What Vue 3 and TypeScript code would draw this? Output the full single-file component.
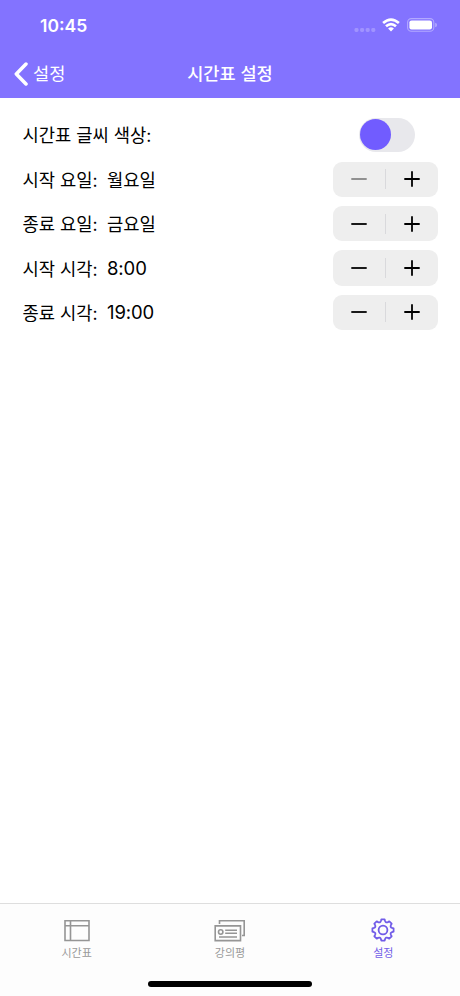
<script setup lang="ts">
import { ref } from 'vue'

interface Row {
  label: string
  value: string
  numeric: boolean
  minusDisabled: boolean
}

const rows = ref<Row[]>([
  { label: '시작 요일:', value: '월요일', numeric: false, minusDisabled: true },
  { label: '종료 요일:', value: '금요일', numeric: false, minusDisabled: false },
  { label: '시작 시각:', value: '8:00', numeric: true, minusDisabled: false },
  { label: '종료 시각:', value: '19:00', numeric: true, minusDisabled: false },
])

function gearPath(): string {
  const parts: string[] = []
  const point = (r: number, deg: number): string => {
    const a = (deg * Math.PI) / 180
    return `${(13 + r * Math.cos(a)).toFixed(2)} ${(13 + r * Math.sin(a)).toFixed(2)}`
  }
  for (let i = 0; i < 8; i++) {
    const c = i * 45
    parts.push(`${i === 0 ? 'M' : 'L'}${point(10.7, c - 9)}`)
    parts.push(`L${point(10.7, c + 9)}`)
    parts.push(`L${point(9.3, c + 13)}`)
    parts.push(`Q${point(7.5, c + 22.5)} ${point(9.3, c + 32)}`)
  }
  return parts.join('') + 'Z'
}
const gear = gearPath()
</script>

<template>
  <div class="screen">
    <header class="header">
      <div class="status">
        <span class="clock">10:45</span>
        <div class="indicators">
          <svg class="dots" width="22" height="6" viewBox="0 0 22 6">
            <rect v-for="n in 4" :key="n" :x="(n - 1) * 5.6 + 0.5" y="1" width="4" height="4" rx="1.4" />
          </svg>
          <svg class="wifi" width="18" height="14" viewBox="0 0 18 14">
            <path d="M1.1 5.1Q9-2 16.9 5.1" />
            <path d="M4 8.3Q9 3.9 14 8.3" />
            <path class="solid" d="M6.1 10.5Q9 8.1 11.9 10.5L9 13.5Z" />
          </svg>
          <svg class="battery" width="31" height="14" viewBox="0 0 31 14">
            <rect class="shell" x=".6" y=".6" width="26.2" height="12.6" rx="3.8" />
            <rect class="charge" x="2.4" y="2.4" width="22.6" height="9" rx="2.2" />
            <path class="tip" d="M28.2 4.7Q30 5.2 30 7T28.2 9.2Z" />
          </svg>
        </div>
      </div>
      <nav class="navbar">
        <button class="back" type="button">
          <svg width="14" height="24" viewBox="0 0 14 24"><path d="M12 2L2.3 12L12 22" /></svg>
          <span>설정</span>
        </button>
        <h1>시간표 설정</h1>
      </nav>
    </header>

    <main class="list">
      <div class="row">
        <span class="label">시간표 글씨 색상:</span>
        <button class="switch" type="button" role="switch" aria-checked="false"><i /></button>
      </div>
      <div v-for="row in rows" :key="row.label" class="row">
        <span class="label fixed">{{ row.label }}</span>
        <span class="value" :class="{ numeric: row.numeric }">{{ row.value }}</span>
        <div class="stepper">
          <button type="button" :disabled="row.minusDisabled">
            <svg width="16" height="16" viewBox="0 0 16 16"><path d="M.3 8H15.7" /></svg>
          </button>
          <i class="divider" />
          <button type="button">
            <svg width="16" height="16" viewBox="0 0 16 16"><path d="M.3 8H15.7M8 .3V15.7" /></svg>
          </button>
        </div>
      </div>
    </main>

    <footer class="tabbar">
      <div class="tabs">
        <div class="tab">
          <svg width="34" height="26" viewBox="0 0 34 26">
            <path d="M5 3.7H29V23.5H5ZM5 8.7H29M10.5 3.7V23.5" />
          </svg>
          <span>시간표</span>
        </div>
        <div class="tab">
          <svg width="34" height="26" viewBox="0 0 34 26">
            <path d="M6.5 7V3.7H31.2V18.5H29M2.2 8.9H27.5V23.6H2.2Z" />
            <circle cx="7.7" cy="15" r="2.2" />
            <path d="M12.2 13.3H24M12.2 16.3H24M6 20H24" />
          </svg>
          <span>강의평</span>
        </div>
        <div class="tab active">
          <svg width="26" height="26" viewBox="0 0 26 26">
            <path :d="gear" />
            <circle cx="13" cy="13" r="4.4" />
          </svg>
          <span>설정</span>
        </div>
      </div>
      <div class="home" />
    </footer>
  </div>
</template>

<style>
body {
  margin: 0;
  background: #fff;
}
</style>

<style scoped>
.screen {
  display: flex;
  flex-direction: column;
  width: 460px;
  height: 996px;
  overflow: hidden;
  background: #fff;
  color: #000;
  font-family: Inter, 'Noto Sans CJK KR', sans-serif;
}
button {
  padding: 0;
  border: 0;
  background: none;
  color: inherit;
  font: inherit;
}
svg {
  display: block;
  flex: none;
  fill: none;
  stroke: currentColor;
}
.header {
  height: 98px;
  flex: none;
  background: #8373ff;
  color: #fff;
}
.status {
  display: flex;
  height: 50px;
  box-sizing: border-box;
  padding: 0 22.5px 0 40px;
  align-items: center;
  justify-content: space-between;
}
.clock {
  font-size: 17.5px;
  font-weight: 600;
}
.indicators {
  display: flex;
  align-items: center;
}
.dots {
  margin: 9px 6px 0 0;
  fill: #a093ff;
  stroke: none;
}
.wifi {
  margin-right: 7px;
  stroke-width: 2.7;
}
.wifi .solid {
  fill: #fff;
  stroke: none;
}
.battery .shell {
  stroke: #b3a9ff;
  stroke-width: 1.1;
}
.battery .charge {
  fill: #fff;
  stroke: none;
}
.battery .tip {
  fill: #b3a9ff;
  stroke: none;
}
.navbar {
  display: grid;
  grid-template-columns: 1fr auto 1fr;
  height: 48px;
  align-items: center;
}
.back {
  display: flex;
  padding-left: 14px;
  align-items: center;
  gap: 5px;
  font-size: 17.6px;
}
.back span,
h1 {
  padding-bottom: 3px;
}
.back svg {
  stroke-width: 3.5;
  stroke-linecap: round;
  stroke-linejoin: round;
}
h1 {
  margin: 0;
  font-size: 17.6px;
  font-weight: 500;
}
.list {
  flex: 1;
  padding: 14.8px 22.5px 0;
}
.row {
  display: flex;
  height: 44.35px;
  align-items: center;
  font-size: 17.7px;
}
.label,
.value {
  white-space: nowrap;
}
.label,
.value:not(.numeric) {
  padding-bottom: 1px;
}
.fixed {
  width: 84.5px;
}
.numeric {
  font-size: 18.5px;
  letter-spacing: -0.1px;
}
.switch {
  display: flex;
  width: 56px;
  height: 34px;
  box-sizing: border-box;
  margin: 0 22.5px 0 auto;
  padding-left: 1px;
  align-items: center;
  border-radius: 17px;
  background: #e8e8ec;
}
.switch i {
  width: 31px;
  height: 31px;
  border-radius: 50%;
  background: #715cff;
}
.stepper {
  display: flex;
  width: 104.5px;
  height: 35.5px;
  margin-left: auto;
  align-items: center;
  border-radius: 9px;
  background: #eee;
}
.stepper button {
  display: flex;
  flex: 1;
  align-items: center;
  justify-content: center;
}
.stepper svg {
  stroke-width: 1.8;
}
.stepper button:disabled {
  color: #858585;
}
.divider {
  width: 1px;
  height: 20px;
  background: #d9d9dc;
}
.tabbar {
  display: flex;
  flex-direction: column;
  height: 93px;
  box-sizing: border-box;
  flex: none;
  align-items: center;
  justify-content: space-between;
  padding-bottom: 9.5px;
  border-top: 1px solid #dedede;
  background: #fdfdfd;
}
.tabs {
  display: grid;
  grid-template-columns: repeat(3, 1fr);
  width: 100%;
  padding-top: 13px;
}
.tab {
  display: flex;
  flex-direction: column;
  align-items: center;
  color: #999;
  font-size: 11px;
  line-height: 17px;
}
.tab svg {
  margin-bottom: 2px;
  stroke-width: 1.6;
  color: #959595;
}
.tab.active,
.tab.active svg {
  color: #715ce8;
}
.tab.active svg {
  stroke-width: 1.8;
  stroke-linejoin: round;
}
.home {
  width: 164px;
  height: 5.5px;
  border-radius: 3px;
  background: #000;
}
</style>
